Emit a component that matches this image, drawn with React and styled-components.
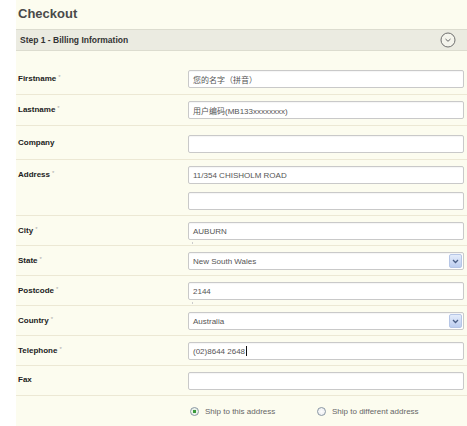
import React from "react";
import styled, { createGlobalStyle } from "styled-components";

const Global = createGlobalStyle`
  html, body { margin: 0; padding: 0; background: #ffffff; }
  body { font-family: "Liberation Sans", Arial, sans-serif; }
`;

const Page = styled.div`
  width: 467px;
  height: 426px;
  padding-left: 16px;
  box-sizing: border-box;
  background: #ffffff;
  overflow: hidden;
`;

const Panel = styled.div`
  background: #fcfcef;
  height: 100%;
  display: flex;
  flex-direction: column;
`;

const Title = styled.h1`
  margin: 0;
  padding: 6px 0 0 2px;
  height: 23px;
  font-size: 13px;
  line-height: 16px;
  font-weight: bold;
  color: #4a4a4a;
`;

const StepBar = styled.div`
  height: 20px;
  display: flex;
  align-items: center;
  justify-content: space-between;
  padding: 0 11px 0 4px;
  background: #ebebe1;
  border-top: 1px solid #dcdccf;
  border-bottom: 1px solid #dcdccf;
  margin-bottom: 13px;
`;

const StepTitle = styled.span`
  font-size: 8.5px;
  font-weight: bold;
  color: #333;
`;

const Row = styled.div`
  display: flex;
  align-items: flex-start;
  padding: ${(p) => p.$pt ?? 6}px 3px ${(p) => p.$pb ?? 5}px 2px;
  border-bottom: ${(p) => (p.$last ? "none" : "1px solid #ece8d4")};
`;

const Label = styled.div`
  width: 170px;
  flex: none;
  font-size: 8px;
  line-height: 15px;
  font-weight: bold;
  color: #222;
`;

const Req = styled.sup`
  font-size: 6px;
  font-weight: normal;
  color: #aaa;
  margin-left: 2px;
  vertical-align: 2px;
`;

const Fields = styled.div`
  flex: 1;
  display: flex;
  flex-direction: column;
  gap: 8px;
`;

const Box = styled.div`
  position: relative;
  height: 18px;
  box-sizing: border-box;
  border: 1px solid #c9c9c9;
  border-radius: 2px;
  background: #ffffff;
  box-shadow: inset 0 1px 1px rgba(0, 0, 0, 0.04);
  display: flex;
  align-items: center;
  padding: 0 4px;
  font-family: "Liberation Sans", "Noto Sans CJK SC", Arial, sans-serif;
  font-size: 8px;
  color: #555;
  white-space: nowrap;
  ${(p) =>
    p.$hint &&
    `&::after {
      content: "";
      position: absolute;
      left: 3px;
      bottom: -5px;
      width: 1px;
      height: 2px;
      background: #ccc;
    }`}
`;

const Caret = styled.span`
  display: inline-block;
  width: 1px;
  height: 10px;
  background: #111;
  margin-left: 1px;
`;

const SelectBox = styled(Box)`
  padding-right: 1px;
  justify-content: space-between;
`;

const Arrow = styled.span`
  width: 13px;
  height: 14px;
  box-sizing: border-box;
  border: 1px solid #b6c6e6;
  border-radius: 2px;
  background: linear-gradient(#e4ecfb, #bccdef);
  display: flex;
  align-items: center;
  justify-content: center;
`;

const RadioRow = styled.div`
  display: flex;
  align-items: center;
  padding: 11px 0 0 174px;
  gap: 0;
`;

const RadioItem = styled.label`
  display: flex;
  align-items: center;
  gap: 6px;
  width: ${(p) => p.$w}px;
  font-size: 8px;
  color: #666;
`;

const RadioDot = styled.span`
  width: 9px;
  height: 9px;
  box-sizing: border-box;
  border-radius: 50%;
  border: 1px solid #8a97a4;
  background: radial-gradient(circle, ${(p) => (p.$on ? "#3a9a3a 0 1.6px, #eaf3ea 2px" : "#fdfdfd 0, #e7e9ec 100%")});
  flex: none;
`;

const Chevron = () => (
  <svg width="7" height="5" viewBox="0 0 7 5">
    <path d="M1 1 L3.5 3.5 L6 1" fill="none" stroke="#4b5f86" strokeWidth="1.3" />
  </svg>
);

const CircleToggle = () => (
  <svg width="16" height="16" viewBox="0 0 16 16">
    <circle cx="8" cy="8" r="7" fill="#f4f4ec" stroke="#6f6f6f" strokeWidth="1" />
    <path d="M5.5 7 L8 9.3 L10.5 7" fill="none" stroke="#666" strokeWidth="1" />
  </svg>
);

const TextRow = ({ label, req, value, pt, pb, hint, caret }) => (
  <Row $pt={pt} $pb={pb}>
    <Label>
      {label}
      {req && <Req>*</Req>}
    </Label>
    <Fields>
      <Box $hint={hint}>
        {value}
        {caret && <Caret />}
      </Box>
    </Fields>
  </Row>
);

const SelectRow = ({ label, value }) => (
  <Row>
    <Label>
      {label}
      <Req>*</Req>
    </Label>
    <Fields>
      <SelectBox>
        {value}
        <Arrow>
          <Chevron />
        </Arrow>
      </SelectBox>
    </Fields>
  </Row>
);

export default function App() {
  return (
    <>
      <Global />
      <Page>
        <Panel>
          <Title>Checkout</Title>
          <StepBar>
            <StepTitle>Step 1 - Billing Information</StepTitle>
            <CircleToggle />
          </StepBar>
          <TextRow label="Firstname" req value="您的名字（拼音）" pb={6} />
          <TextRow label="Lastname" req value="用户编码(MB133xxxxxxxx)" pb={6} />
          <TextRow label="Company" pt={9} pb={6} />
          <Row>
            <Label>
              Address<Req>*</Req>
            </Label>
            <Fields>
              <Box>11/354 CHISHOLM ROAD</Box>
              <Box />
            </Fields>
          </Row>
          <TextRow label="City" req value="AUBURN" hint />
          <SelectRow label="State" value="New South Wales" />
          <TextRow label="Postcode" req value="2144" hint />
          <SelectRow label="Country" value="Australia" />
          <TextRow label="Telephone" req value="(02)8644 2648" caret />
          <TextRow label="Fax" />
          <RadioRow>
            <RadioItem $w={127}>
              <RadioDot $on />
              Ship to this address
            </RadioItem>
            <RadioItem $w={140}>
              <RadioDot />
              Ship to different address
            </RadioItem>
          </RadioRow>
        </Panel>
      </Page>
    </>
  );
}
